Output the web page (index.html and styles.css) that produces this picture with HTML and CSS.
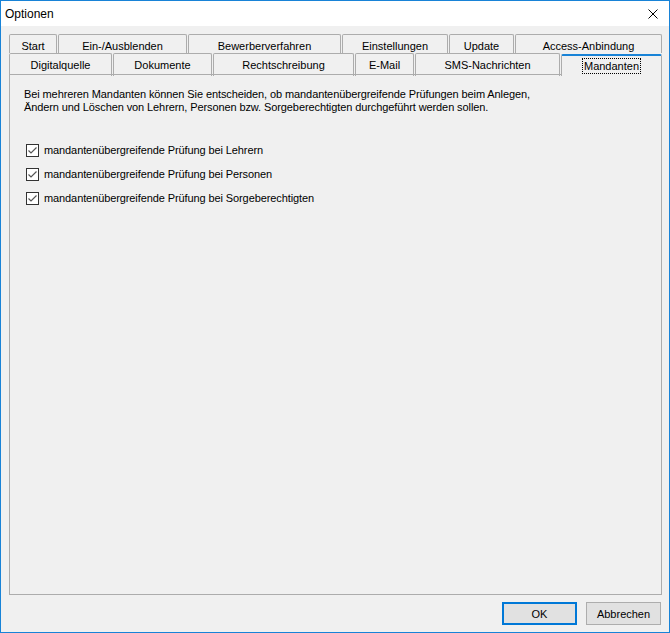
FILE: index.html
```html
<!DOCTYPE html>
<html lang="de">
<head>
    <meta charset="UTF-8">
    <title>Optionen</title>
    <link rel="stylesheet" href="styles.css">
</head>
<body>
    <div class="window">
        <div class="titlebar">
            <span class="title">Optionen</span>
            <svg class="close" width="10" height="10" viewBox="0 0 10 10">
                <path d="M0.5 0.5 L9.5 9.5 M9.5 0.5 L0.5 9.5" stroke="#000" stroke-width="1" fill="none"/>
            </svg>
        </div>
        <div class="content">
            <div class="tabs">
                <div class="tab-row row-back">
                    <div class="tab">Start</div>
                    <div class="tab">Ein-/Ausblenden</div>
                    <div class="tab">Bewerberverfahren</div>
                    <div class="tab">Einstellungen</div>
                    <div class="tab">Update</div>
                    <div class="tab last">Access-Anbindung</div>
                </div>
                <div class="tab-row row-front">
                    <div class="tab">Digitalquelle</div>
                    <div class="tab">Dokumente</div>
                    <div class="tab">Rechtschreibung</div>
                    <div class="tab">E-Mail</div>
                    <div class="tab">SMS-Nachrichten</div>
                    <div class="tab active last"><span class="focus">Mandanten</span></div>
                </div>
            </div>
            <div class="panel">
                <p class="info">Bei mehreren Mandanten können Sie entscheiden, ob mandantenübergreifende Prüfungen beim Anlegen,<br>Ändern und Löschen von Lehrern, Personen bzw. Sorgeberechtigten durchgeführt werden sollen.</p>
                <div class="checks">
                    <label class="check">
                        <span class="box"><svg width="11" height="11" viewBox="0 0 11 11"><path d="M1.5 5.5 L4 8 L9.5 2.5" stroke="#555" stroke-width="1.2" fill="none"/></svg></span>
                        mandantenübergreifende Prüfung bei Lehrern
                    </label>
                    <label class="check">
                        <span class="box"><svg width="11" height="11" viewBox="0 0 11 11"><path d="M1.5 5.5 L4 8 L9.5 2.5" stroke="#555" stroke-width="1.2" fill="none"/></svg></span>
                        mandantenübergreifende Prüfung bei Personen
                    </label>
                    <label class="check">
                        <span class="box"><svg width="11" height="11" viewBox="0 0 11 11"><path d="M1.5 5.5 L4 8 L9.5 2.5" stroke="#555" stroke-width="1.2" fill="none"/></svg></span>
                        mandantenübergreifende Prüfung bei Sorgeberechtigten
                    </label>
                </div>
            </div>
            <div class="footer">
                <button class="btn default">OK</button>
                <button class="btn">Abbrechen</button>
            </div>
        </div>
    </div>
</body>
</html>
```

FILE: styles.css
```css
* {
    box-sizing: border-box;
}
body {
    margin: 0;
    font-family: "Liberation Sans", Arial, sans-serif;
    font-size: 11px;
    color: #000;
}
.window {
    width: 670px;
    height: 633px;
    border: 1px solid #1883d7;
    display: flex;
    flex-direction: column;
    background-color: #f0f0f0;
}
.titlebar {
    height: 25px;
    background-color: #fff;
    display: flex;
    justify-content: space-between;
    align-items: flex-start;
    padding: 6px 11px 0 4px;
}
.title {
    font-size: 12px;
    line-height: 14px;
}
.close {
    margin-top: 2px;
}
.content {
    flex: 1;
    display: flex;
    flex-direction: column;
    padding: 8px 7px 0 8px;
}
.tab-row {
    display: grid;
}
.row-back {
    grid-template-columns: 49px 130px 154px 107px 66px 147px;
    height: 19px;
}
.row-front {
    grid-template-columns: 104px 100px 142px 60px 146px 101px;
    height: 21px;
}
.tab {
    margin-right: 1px;
    border: 1px solid #acacac;
    border-bottom: none;
    border-radius: 2px 2px 0 0;
    background-color: #f0f0f0;
    text-align: center;
    line-height: 13px;
    padding-top: 5px;
    white-space: nowrap;
    overflow: hidden;
}
.tab.last {
    margin-right: 0;
}
.tab.active {
    position: relative;
    z-index: 1;
    height: 22px;
    margin-top: 1px;
    border-top: 2px solid #1883d7;
    padding-top: 3px;
}
.focus {
    display: inline-block;
    outline: 1px dotted #000;
    padding: 0 1px;
    line-height: 14px;
}
.panel {
    flex: 1;
    border: 1px solid #acacac;
    padding: 13px 14px;
}
.info {
    margin: 0;
    line-height: 13px;
    letter-spacing: -0.1px;
}
.checks {
    margin-top: 24px;
    display: flex;
    flex-direction: column;
    padding-left: 2px;
}
.check {
    height: 24px;
    display: flex;
    align-items: center;
    gap: 5px;
    letter-spacing: -0.1px;
}
.box {
    width: 13px;
    height: 13px;
    border: 1px solid #333;
    background-color: #fff;
    display: flex;
    align-items: center;
    justify-content: center;
}
.footer {
    display: flex;
    justify-content: flex-end;
    gap: 9px;
    padding: 7px 1px 7px 0;
}
.btn {
    width: 75px;
    height: 23px;
    font-family: "Liberation Sans", Arial, sans-serif;
    font-size: 11px;
    color: #000;
    background-color: #e1e1e1;
    border: 1px solid #adadad;
    padding: 0;
}
.btn.default {
    border: 2px solid #0078d7;
}
```
